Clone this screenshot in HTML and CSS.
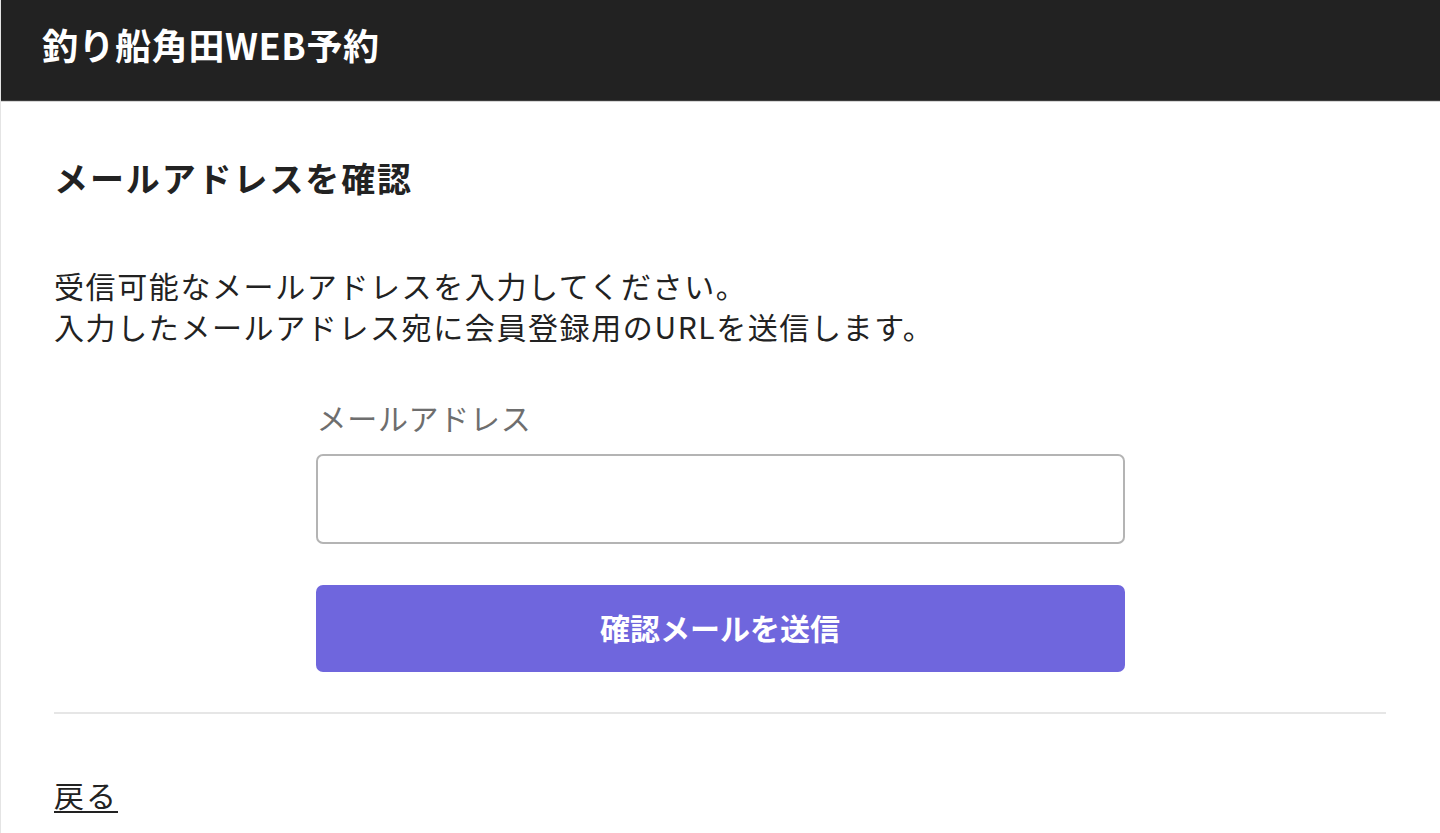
FILE: index.html
```html
<!DOCTYPE html>
<html lang="ja">
<head>
<meta charset="utf-8">
<title>釣り船角田WEB予約</title>
<link rel="stylesheet" href="styles.css">
</head>
<body>
<div class="page">
  <header class="site-header">
    <div class="brand">釣り船角田WEB予約</div>
  </header>
  <main class="content">
    <h1 class="title">メールアドレスを確認</h1>
    <p class="lead">受信可能なメールアドレスを入力してください。<br>入力したメールアドレス宛に会員登録用のURLを送信します。</p>
    <form class="form" onsubmit="return false;">
      <label class="label" for="email">メールアドレス</label>
      <input class="input" id="email" type="email">
      <button class="button" type="submit">確認メールを送信</button>
    </form>
    <hr class="divider">
    <a class="back" href="#">戻る</a>
  </main>
</div>
</body>
</html>
```
FILE: styles.css
```css
html, body {
  margin: 0;
  padding: 0;
  background: #ffffff;
}
body {
  font-family: "Noto Sans CJK JP", "Noto Sans", sans-serif;
  color: #222222;
}
.page {
  min-height: 100vh;
  border-left: 1px solid #e4e4e4;
  box-sizing: border-box;
}
.site-header {
  height: 101px;
  background: #222222;
  border-bottom: 1px solid #3c3c3c;
  box-shadow: 0 1px 0 #d6d6d6;
  display: flex;
  align-items: center;
  padding: 0 0 12px 41px;
  box-sizing: border-box;
}
.brand {
  color: #ffffff;
  font-size: 36px;
  font-weight: 700;
  line-height: 1.4;
  letter-spacing: 0.6px;
}
.content {
  padding: 53px 54px 0 53px;
}
.title {
  margin: 0;
  font-size: 34px;
  font-weight: 700;
  line-height: 48px;
  letter-spacing: 1.9px;
  color: #222222;
}
.lead {
  margin: 63px 0 0;
  font-size: 30px;
  line-height: 41px;
  letter-spacing: 1.6px;
  color: #222222;
}
.form {
  width: 809px;
  margin: 50px auto 0;
  display: flex;
  flex-direction: column;
}
.label {
  font-size: 30px;
  line-height: 41px;
  color: #6e6e6e;
  letter-spacing: 0.7px;
  padding-left: 1px;
}
.input {
  margin-top: 16px;
  height: 90px;
  box-sizing: border-box;
  border: 2px solid #b4b4b4;
  border-radius: 7px;
  background: #ffffff;
  font-size: 30px;
  padding: 0 16px;
  outline: none;
}
.button {
  margin-top: 41px;
  height: 87px;
  border: none;
  border-radius: 7px;
  background: #6f66dd;
  color: #ffffff;
  font-family: "Noto Sans CJK JP", "Noto Sans", sans-serif;
  font-size: 30px;
  font-weight: 700;
  padding: 0 0 4px;
  cursor: pointer;
}
.divider {
  margin: 40px 0 0;
  border: none;
  height: 2px;
  background: #e6e6e6;
}
.back {
  display: inline-block;
  margin-top: 60px;
  font-size: 30px;
  line-height: 41px;
  color: #222222;
  letter-spacing: 2px;
  text-decoration: underline;
  text-underline-offset: 4px;
  text-decoration-thickness: 2px;
}
```
